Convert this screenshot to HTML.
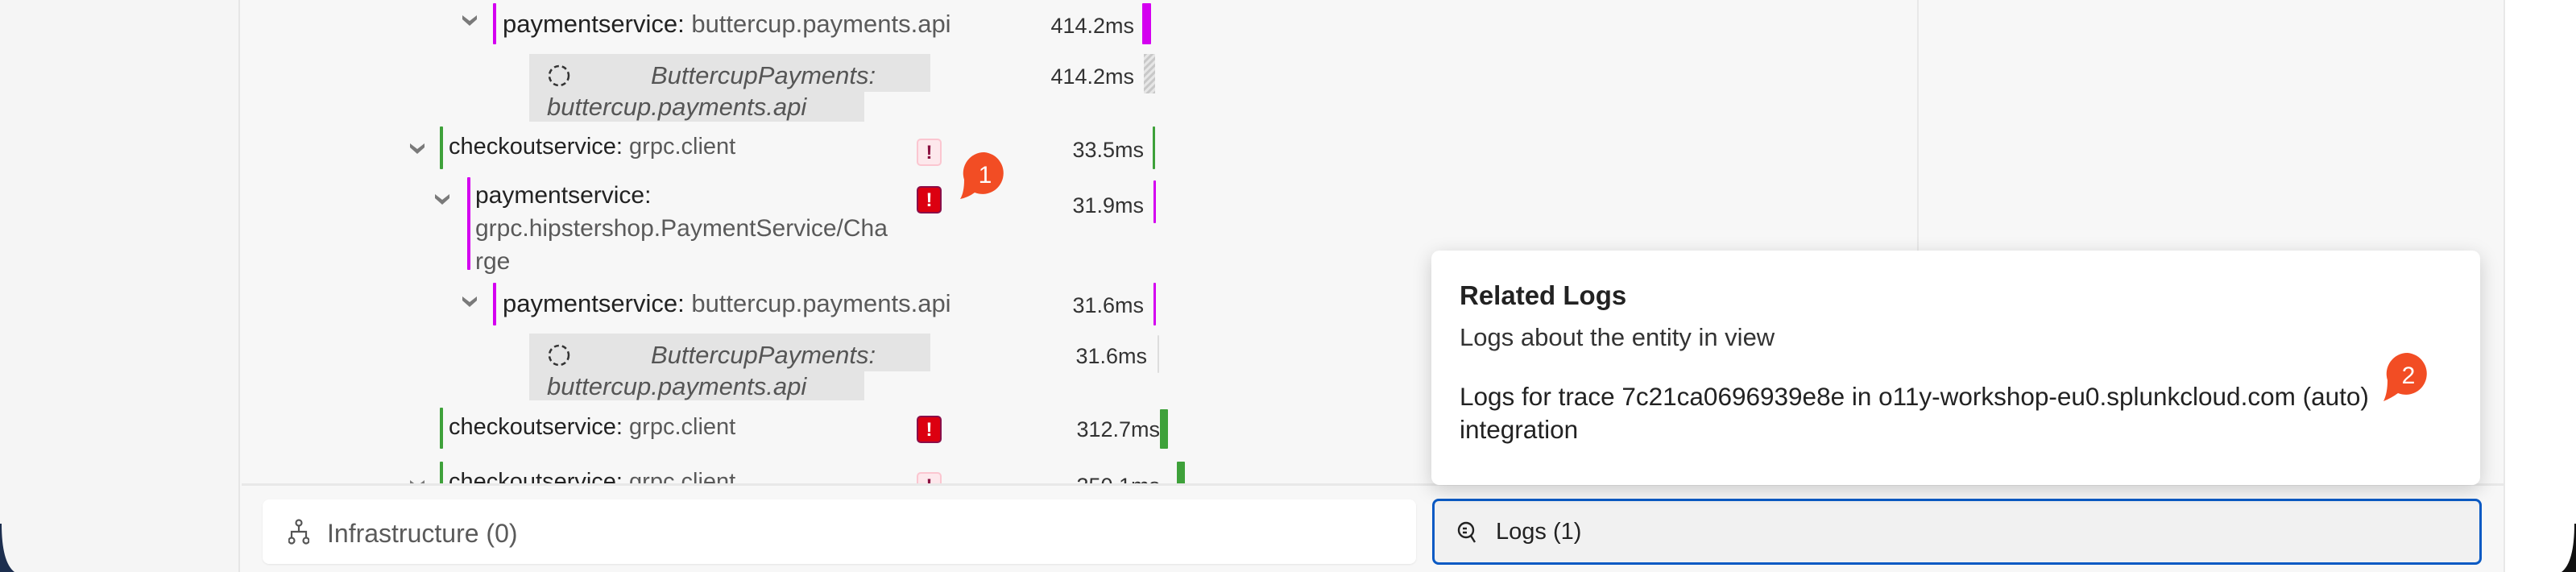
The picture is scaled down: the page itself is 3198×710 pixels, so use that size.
<!DOCTYPE html>
<html><head><meta charset="utf-8"><style>
*{margin:0;padding:0;box-sizing:border-box}
body{width:3198px;height:710px;overflow:hidden;background:#f7f7f7;font-family:"Liberation Sans",sans-serif;position:relative}
.a{position:absolute;white-space:nowrap}
.t{font-size:29px;color:#222}
.tp{font-size:31px}
.t span{color:#5a5a5a}
.d{font-size:27px;color:#333;text-align:right;width:150px}
.bar{position:absolute;width:5px;border-radius:1px}
.chev{position:absolute;width:22px;height:16px}
.grey{position:absolute;background:#e4e4e4}
.it{font-size:31px;color:#555;font-style:italic}
.badge{position:absolute;width:31px;height:34px;border-radius:5px;font-size:24px;font-weight:bold;text-align:center;line-height:32px}
.pk{background:#fde8ec;border:2px solid #fbc6d0;color:#8a1040}
.rd{background:#dc0010;border:2px solid #8a0f4a;color:#fff}
</style></head><body>
<div class="a" style="left:0;top:0;width:298px;height:710px;background:#f5f5f5;border-right:2px solid #e6e6e6"></div>
<div class="a" style="left:2380px;top:0;width:2px;height:600px;background:#e8e8e8"></div>
<div class="a" style="left:3108px;top:0;width:90px;height:710px;background:#fff;border-left:2px solid #e8e8e8"></div>
<svg class="a" style="left:0;top:650px" width="20" height="60"><path d="M0 0 L2 0 Q2 48 18 60 L0 60Z" fill="#1d2f4f"/></svg>
<svg class="a" style="left:3178px;top:650px" width="20" height="60"><path d="M20 0 L18 0 Q18 48 2 60 L20 60Z" fill="#111"/></svg>

<svg width="0" height="0" style="position:absolute"><defs><path id="cv" d="M2 2 L11 9 L20 2 L20 7 L11 15 L2 7Z" fill="#7a7a7a"/></defs></svg>

<!-- row1 -->
<svg class="chev" style="left:572px;top:17px" viewBox="0 0 22 16"><use href="#cv"/></svg>
<div class="bar" style="left:612px;top:4px;height:51px;width:4px;background:#d400f0"></div>
<div class="a t tp" style="left:624px;top:12px">paymentservice: <span>buttercup.payments.api</span></div>
<div class="a d" style="left:1258px;top:17px">414.2ms</div>
<div class="bar" style="left:1418px;top:4px;height:51px;width:11px;background:#d400f0"></div>

<!-- grey box 1 -->
<div class="grey" style="left:657px;top:67px;width:498px;height:47px"></div>
<div class="grey" style="left:657px;top:114px;width:416px;height:37px"></div>
<svg class="a" style="left:678px;top:78px" width="32" height="32"><circle cx="16" cy="16" r="12" fill="none" stroke="#333" stroke-width="2.5" stroke-dasharray="6 4"/></svg>
<div class="a it" style="left:808px;top:76px">ButtercupPayments:</div>
<div class="a it" style="left:679px;top:115px">buttercup.payments.api</div>
<div class="a d" style="left:1258px;top:80px">414.2ms</div>
<svg class="a" style="left:1420px;top:67px" width="14" height="49"><defs><pattern id="h" width="6" height="6" patternUnits="userSpaceOnUse" patternTransform="rotate(45)"><rect width="3" height="6" fill="#c8c8c8"/><rect x="3" width="3" height="6" fill="#e6e6e6"/></pattern></defs><rect width="14" height="49" fill="url(#h)"/></svg>

<!-- checkout row -->
<svg class="chev" style="left:507px;top:176px" viewBox="0 0 22 16"><use href="#cv"/></svg>
<div class="bar" style="left:546px;top:157px;height:53px;width:4px;background:#3ea13a"></div>
<div class="a t" style="left:557px;top:166px">checkoutservice: <span>grpc.client</span></div>
<div class="badge pk" style="left:1138px;top:172px">!</div>
<div class="a d" style="left:1270px;top:171px">33.5ms</div>
<div class="bar" style="left:1431px;top:157px;height:53px;width:3px;background:#3ea13a"></div>
<svg class="a" style="left:1188px;top:187px" width="64" height="64"><path d="M34 2 A26 26 0 1 1 22 52 Q14 58 4 60 Q9 52 9 36 A26 26 0 0 1 34 2Z" fill="#f24d24"/><text x="35" y="40" font-family="Liberation Sans" font-size="30" fill="#fff" text-anchor="middle">1</text></svg>

<!-- payment grpc -->
<svg class="chev" style="left:538px;top:239px" viewBox="0 0 22 16"><use href="#cv"/></svg>
<div class="bar" style="left:580px;top:220px;height:115px;width:4px;background:#d400f0"></div>
<div class="a t" style="left:590px;top:222px;line-height:41px;white-space:normal;width:600px;font-size:30px">paymentservice:<br><span>grpc.hipstershop.PaymentService/Cha<br>rge</span></div>
<div class="badge rd" style="left:1138px;top:231px">!</div>
<div class="a d" style="left:1270px;top:240px">31.9ms</div>
<div class="bar" style="left:1432px;top:224px;height:53px;width:3px;background:#d400f0"></div>

<!-- payment buttercup -->
<svg class="chev" style="left:572px;top:366px" viewBox="0 0 22 16"><use href="#cv"/></svg>
<div class="bar" style="left:612px;top:351px;height:53px;width:4px;background:#d400f0"></div>
<div class="a t tp" style="left:624px;top:359px">paymentservice: <span>buttercup.payments.api</span></div>
<div class="a d" style="left:1270px;top:364px">31.6ms</div>
<div class="bar" style="left:1432px;top:351px;height:53px;width:3px;background:#d400f0"></div>

<!-- grey box 2 -->
<div class="grey" style="left:657px;top:414px;width:498px;height:47px"></div>
<div class="grey" style="left:657px;top:461px;width:416px;height:36px"></div>
<svg class="a" style="left:678px;top:425px" width="32" height="32"><circle cx="16" cy="16" r="12" fill="none" stroke="#333" stroke-width="2.5" stroke-dasharray="6 4"/></svg>
<div class="a it" style="left:808px;top:423px">ButtercupPayments:</div>
<div class="a it" style="left:679px;top:462px">buttercup.payments.api</div>
<div class="a d" style="left:1274px;top:427px">31.6ms</div>
<div class="bar" style="left:1437px;top:416px;height:47px;width:2px;background:#ddd"></div>

<!-- checkout row 2 -->
<div class="bar" style="left:546px;top:506px;height:51px;width:4px;background:#3ea13a"></div>
<div class="a t" style="left:557px;top:514px">checkoutservice: <span>grpc.client</span></div>
<div class="badge rd" style="left:1138px;top:516px">!</div>
<div class="a d" style="left:1290px;top:518px">312.7ms</div>
<div class="bar" style="left:1440px;top:508px;height:49px;width:10px;background:#3ea13a"></div>

<!-- clipped row -->
<div class="a" style="left:0;top:560px;width:3108px;height:40px;overflow:hidden">
<svg class="chev" style="left:507px;top:34px" viewBox="0 0 22 16"><use href="#cv"/></svg>
<div class="bar" style="left:546px;top:13px;height:40px;width:4px;background:#3ea13a"></div>
<div class="a t" style="left:557px;top:22px">checkoutservice: <span>grpc.client</span></div>
<div class="badge pk" style="left:1138px;top:26px">!</div>
<div class="a d" style="left:1290px;top:28px">350.1ms</div>
<div class="bar" style="left:1461px;top:13px;height:40px;width:10px;background:#3ea13a"></div>
</div>

<!-- bottom area -->
<div class="a" style="left:300px;top:600px;width:2808px;height:110px;background:#f7f7f7;border-top:3px solid #e8e8e8"></div>
<div class="a" style="left:326px;top:620px;width:1432px;height:80px;background:#fff;border-radius:8px;box-shadow:0 1px 2px rgba(0,0,0,.08)"></div>
<svg class="a" style="left:358px;top:644px" width="26" height="32" viewBox="0 0 26 32" fill="none" stroke="#555" stroke-width="2.2"><circle cx="13" cy="5" r="3.5"/><path d="M13 9 V16 M4 23 V16 H22 V23"/><circle cx="4" cy="27" r="3.5"/><circle cx="22" cy="27" r="3.5"/></svg>
<div class="a" style="left:406px;top:644px;font-size:32px;color:#5a5a5a">Infrastructure (0)</div>

<div class="a" style="left:1778px;top:619px;width:1303px;height:82px;background:#f1f1f1;border:3px solid #0a5ac4;border-radius:8px"></div>
<svg class="a" style="left:1809px;top:646px" width="24" height="30" viewBox="0 0 24 30" fill="none" stroke="#222" stroke-width="2.4"><circle cx="11" cy="12" r="9"/><path d="M17 19 L22 27 M7 10 H12 M7 15 H12"/></svg>
<div class="a" style="left:1857px;top:644px;font-size:29px;color:#222">Logs (1)</div>

<!-- popover -->
<div class="a" style="left:1777px;top:311px;width:1302px;height:291px;background:#fff;border-radius:10px;box-shadow:0 6px 24px rgba(0,0,0,.18)"></div>
<div class="a" style="left:1812px;top:348px;font-size:33px;font-weight:bold;color:#222">Related Logs</div>
<div class="a" style="left:1812px;top:401px;font-size:31px;color:#333">Logs about the entity in view</div>
<div class="a" style="left:1812px;top:474px;font-size:31.5px;color:#222">Logs for trace 7c21ca0696939e8e in o11y-workshop-eu0.splunkcloud.com (auto)</div>
<div class="a" style="left:1812px;top:515px;font-size:31.5px;color:#222">integration</div>
<svg class="a" style="left:2955px;top:436px" width="64" height="66"><path d="M34 2 A26 26 0 1 1 22 52 Q14 58 4 62 Q9 52 9 36 A26 26 0 0 1 34 2Z" fill="#f24d24"/><text x="35" y="40" font-family="Liberation Sans" font-size="30" fill="#fff" text-anchor="middle">2</text></svg>
</body></html>
